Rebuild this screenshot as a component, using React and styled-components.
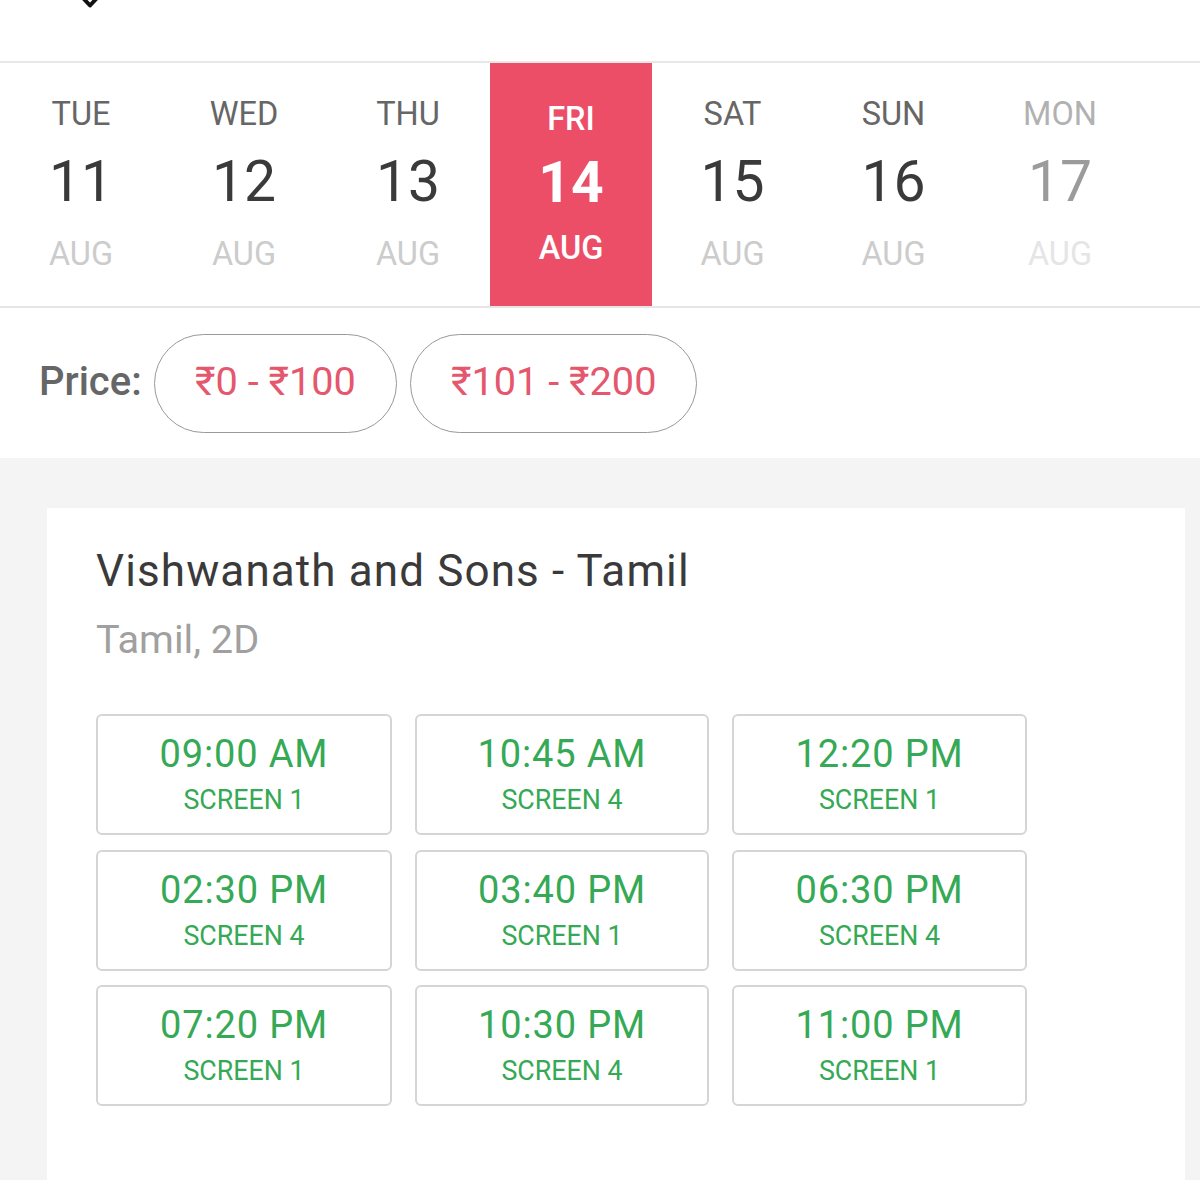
import React from 'react';
import styled, { createGlobalStyle } from 'styled-components';

const Global = createGlobalStyle`
  html, body { margin: 0; padding: 0; background: #fff; }
  body { font-family: Roboto, "Liberation Sans", sans-serif; height: 1180px; overflow: hidden; }
`;
const Page = styled.div`width: 1200px; height: 1180px; overflow: hidden; background: #f4f4f4;`;
const TopBar = styled.header`
  height: 61px; background: #fff; border-bottom: 2px solid #e8e8e8; box-sizing: content-box;
  padding-left: 78px; overflow: hidden;
`;
const Pin = styled.svg`display: block; width: 24px; height: 9px;`;
const DateStrip = styled.nav`
  display: grid; grid-template-columns: 162px 164px 164px 162px 161px 161px 172px 54px;
  height: 243px; background: #fff; border-bottom: 2px solid #e6e6e6;
`;
const Day = styled.div`
  display: flex; flex-direction: column; align-items: center;
  padding-top: ${p => p.$sel ? '38px' : '33px'};
  background: ${p => p.$sel ? '#ec4e67' : 'transparent'};
  opacity: ${p => p.$off ? 0.5 : 1};
`;
const Weekday = styled.span`
  font-size: 32.5px; line-height: 36px; font-weight: ${p => p.$sel ? 500 : 400};
  color: ${p => p.$sel ? '#fff' : '#666'};
`;
const DayNum = styled.span`
  font-size: 57px; line-height: 66px; margin-top: ${p => p.$sel ? '13px' : '17px'};
  font-weight: ${p => p.$sel ? 700 : 400};
  color: ${p => p.$sel ? '#fff' : '#3a3a3a'};
`;
const Month = styled.span`
  font-size: 32.5px; line-height: 36px; margin-top: ${p => p.$sel ? '14px' : '21px'};
  font-weight: ${p => p.$sel ? 500 : 400};
  color: ${p => p.$sel ? '#fff' : '#ccc'};
`;
const PriceRow = styled.section`
  height: 150px; background: #fff; display: flex; align-items: flex-start;
  padding: 26px 0 0 39px; box-sizing: border-box;
`;
const PriceLabel = styled.span`
  font-size: 40px; font-weight: 500; color: #666; line-height: 96px; width: 115px;
`;
const Pill = styled.button`
  height: 99px; padding: 0 40px 4px; margin-right: 13px; border: 1px solid #999; border-radius: 50px;
  background: #fff; color: #e4576d; font: 400 39.7px Roboto, sans-serif;
`;
const Content = styled.main`padding: 50px 15px 0 47px;`;
const Card = styled.article`background: #fff; padding: 36px 49px 0; height: 700px; box-sizing: border-box;`;
const Title = styled.h2`
  margin: 0; font-size: 44px; line-height: 54px; font-weight: 400; color: #3a3a3a; letter-spacing: 1.12px;
`;
const Sub = styled.p`margin: 20px 0 0; font-size: 39.7px; line-height: 44px; color: #a0a0a0;`;
const Times = styled.div`
  display: grid; grid-template-columns: 296px 294px 295px; column-gap: 23px; row-gap: 14.5px; margin-top: 52px;
  width: 931px;
`;
const Slot = styled.div`
  height: 121px; box-sizing: border-box; border: 2px solid #d5d5d5; border-radius: 6px;
  display: flex; flex-direction: column; align-items: center; color: #35a955; padding-top: 16px;
`;
const Time = styled.span`font-size: 38px; line-height: 44px; letter-spacing: 0.85px;`;
const Screen = styled.span`font-size: 26.8px; line-height: 32px; margin-top: 8px;`;

const days = [
  ['TUE', 11], ['WED', 12], ['THU', 13], ['FRI', 14, 'sel'], ['SAT', 15], ['SUN', 16], ['MON', 17, 'off'],
];
const slots = [
  ['09:00 AM', 1], ['10:45 AM', 4], ['12:20 PM', 1],
  ['02:30 PM', 4], ['03:40 PM', 1], ['06:30 PM', 4],
  ['07:20 PM', 1], ['10:30 PM', 4], ['11:00 PM', 1],
];

export default function App() {
  return (
    <Page>
      <Global />
      <TopBar>
        <Pin viewBox="0 0 24 9">
          <path d="M5 -2 L12 5.5 L19 -2" fill="none" stroke="#111" strokeWidth="4" strokeLinejoin="round" />
        </Pin>
      </TopBar>
      <DateStrip>
        {days.map(([w, n, k]) => (
          <Day key={w} $sel={k === 'sel'} $off={k === 'off'}>
            <Weekday $sel={k === 'sel'}>{w}</Weekday>
            <DayNum $sel={k === 'sel'}>{n}</DayNum>
            <Month $sel={k === 'sel'}>AUG</Month>
          </Day>
        ))}
      </DateStrip>
      <PriceRow>
        <PriceLabel>Price:</PriceLabel>
        <Pill>₹0 - ₹100</Pill>
        <Pill>₹101 - ₹200</Pill>
      </PriceRow>
      <Content>
        <Card>
          <Title>Vishwanath and Sons - Tamil</Title>
          <Sub>Tamil, 2D</Sub>
          <Times>
            {slots.map(([t, s]) => (
              <Slot key={t}>
                <Time>{t}</Time>
                <Screen>SCREEN {s}</Screen>
              </Slot>
            ))}
          </Times>
        </Card>
      </Content>
    </Page>
  );
}
